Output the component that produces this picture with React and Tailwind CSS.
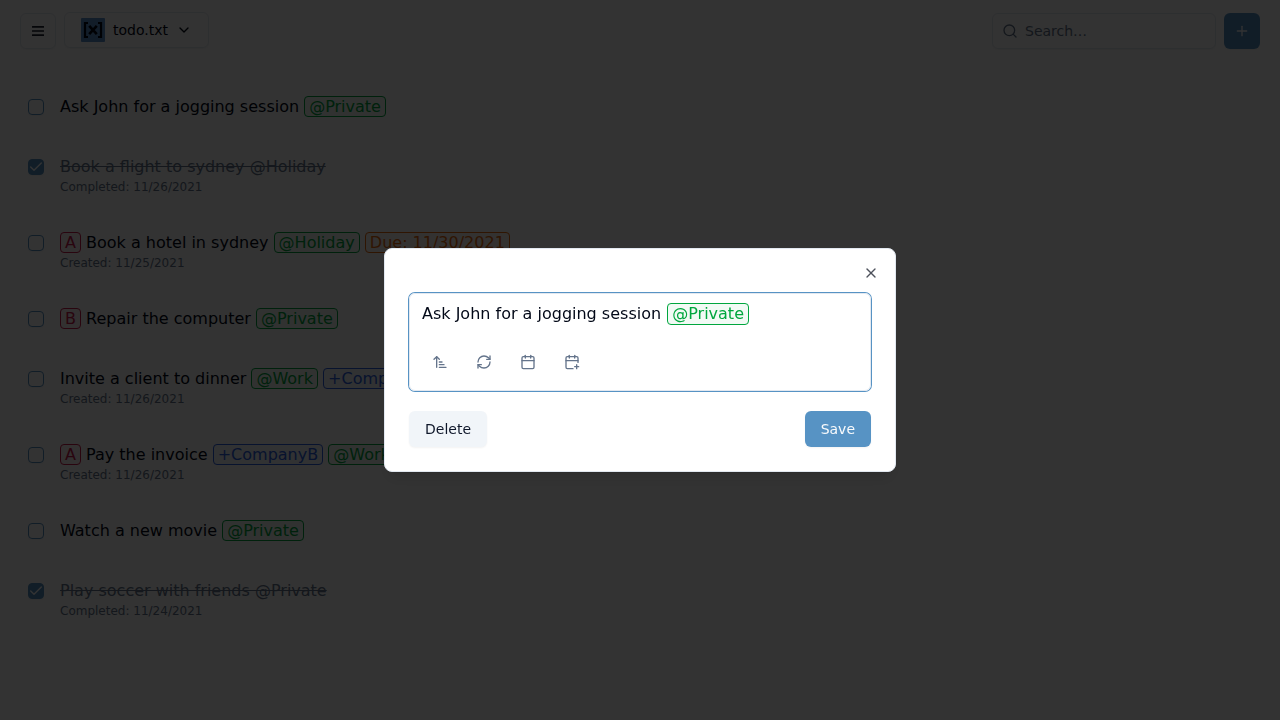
import React from "react";
import {
  ArrowUpNarrowWide,
  Calendar,
  CalendarPlus,
  Check,
  ChevronDown,
  Plus,
  RefreshCw,
  Search,
  X,
} from "lucide-react";

const tagColors = {
  context: "border-[#00a63e] text-[#00a63e] bg-[#00a63e]/5",
  project: "border-[#2b5fe3] text-[#2b5fe3] bg-[#2b5fe3]/5",
  priority: "border-[#cc1a4b] text-[#cc1a4b] bg-[#cc1a4b]/5",
  due: "border-[#ea6a0c] text-[#ea6a0c] bg-[#ea6a0c]/5",
};

const tasks = [
  { parts: ["Ask John for a jogging session ", ["context", "@Private"]] },
  { done: true, parts: ["Book a flight to sydney @Holiday"], date: "Completed: 11/26/2021" },
  {
    parts: [["priority", "A"], " Book a hotel in sydney ", ["context", "@Holiday"], " ", ["due", "Due: 11/30/2021"]],
    date: "Created: 11/25/2021",
  },
  { parts: [["priority", "B"], " Repair the computer ", ["context", "@Private"]] },
  {
    parts: ["Invite a client to dinner ", ["context", "@Work"], " ", ["project", "+CompanyA"]],
    date: "Created: 11/26/2021",
  },
  {
    parts: [["priority", "A"], " Pay the invoice ", ["project", "+CompanyB"], " ", ["context", "@Work"]],
    date: "Created: 11/26/2021",
  },
  { parts: ["Watch a new movie ", ["context", "@Private"]] },
  { done: true, parts: ["Play soccer with friends @Private"], date: "Completed: 11/24/2021" },
];

function Tag({ kind, className = "", children }) {
  return <span className={`rounded border px-1 ${tagColors[kind]} ${className}`}>{children}</span>;
}

function Parts({ parts }) {
  return parts.map((part, i) =>
    typeof part === "string" ? (
      part
    ) : (
      <Tag key={i} kind={part[0]}>
        {part[1]}
      </Tag>
    ),
  );
}

function Task({ task }) {
  return (
    <li className="flex gap-4 px-7 py-[18px]">
      <span
        className={`mt-1 flex size-4 shrink-0 items-center justify-center rounded border border-[#5793c4] text-white shadow-xs ${
          task.done ? "bg-[#5793c4]" : ""
        }`}
      >
        {task.done && <Check className="size-4 shrink-0" />}
      </span>
      <div className="whitespace-pre">
        <div className={`h-6 text-base leading-6 ${task.done ? "text-[#64748b] line-through" : ""}`}>
          <Parts parts={task.parts} />
        </div>
        {task.date && <div className="text-xs leading-4 text-[#64748b]">{task.date}</div>}
      </div>
    </li>
  );
}

function Header() {
  return (
    <header className="flex h-[62px] items-center px-5">
      <button className="flex size-9 items-center justify-center rounded-md border border-[#e2e8f0] shadow-xs">
        <svg viewBox="0 0 12 10" className="h-[10px] w-3" fill="currentColor" opacity="0.9">
          <rect width="12" height="1.7" rx="0.3" />
          <rect y="4.15" width="12" height="1.7" rx="0.3" />
          <rect y="8.3" width="12" height="1.7" rx="0.3" />
        </svg>
      </button>
      <button className="mb-[2px] ml-2 flex h-9 items-center rounded-md border border-[#e2e8f0] px-4 text-sm shadow-xs">
        <svg viewBox="0 0 24 24" className="mr-2 size-6">
          <rect width="24" height="24" rx="1" fill="#5b90cc" />
          <g fill="none" stroke="#020817">
            <path d="M7 5H4v14h3M17 5h3v14h-3" strokeWidth="2.2" />
            <path d="M8.2 7.8l7.6 8.4M15.8 7.8l-7.6 8.4" strokeWidth="2.6" />
          </g>
        </svg>
        todo.txt
        <ChevronDown className="ml-2 size-4" />
      </button>
      <div className="ml-auto flex h-9 w-56 items-center rounded-md border border-[#e2e8f0] px-[9px] text-sm text-[#64748b] shadow-xs">
        <Search className="mr-[7px] size-4" />
        Search…
      </div>
      <button className="ml-2 flex size-9 items-center justify-center rounded-md bg-[#5793c4] text-[#f8fafc] shadow-xs">
        <Plus className="size-4" />
      </button>
    </header>
  );
}

function EditDialog() {
  return (
    <div role="dialog" className="relative flex h-56 w-lg flex-col rounded-lg border border-[#e2e8f0] bg-white px-6 pt-11 shadow-lg">
      <button className="absolute top-4 right-4 text-[#020817] opacity-70">
        <X className="size-4" />
      </button>
      <div className="h-[98px] rounded-md border border-[#e2e8f0] px-3 pt-2 text-base leading-6 ring-1 ring-[#5793c4]">
        <div className="h-6">
          Ask John for a jogging session{" "}
          <Tag kind="context" className="ml-px pb-px">
            @Private
          </Tag>
        </div>
        <div className="mt-[18px] flex gap-2 text-[#64748b]">
          {[ArrowUpNarrowWide, RefreshCw, Calendar, CalendarPlus].map((Icon, i) => (
            <button key={i} className="flex size-9 items-center justify-center">
              <Icon className="size-4" />
            </button>
          ))}
        </div>
      </div>
      <div className="mt-5 flex justify-between text-sm">
        <button className="h-9 rounded-md bg-[#f1f5f9] px-4 text-[#0f172a] shadow-xs">Delete</button>
        <button className="h-9 rounded-md bg-[#5793c4] px-4 text-[#f8fafc] shadow-xs">Save</button>
      </div>
    </div>
  );
}

export default function App() {
  return (
    <div className="h-screen overflow-hidden bg-white font-['DejaVu_Sans',sans-serif] text-[#020817]">
      <Header />
      <ul className="pt-[15px]">
        {tasks.map((task, i) => (
          <Task key={i} task={task} />
        ))}
      </ul>
      <div className="fixed inset-0 flex items-center justify-center bg-black/80">
        <EditDialog />
      </div>
    </div>
  );
}
